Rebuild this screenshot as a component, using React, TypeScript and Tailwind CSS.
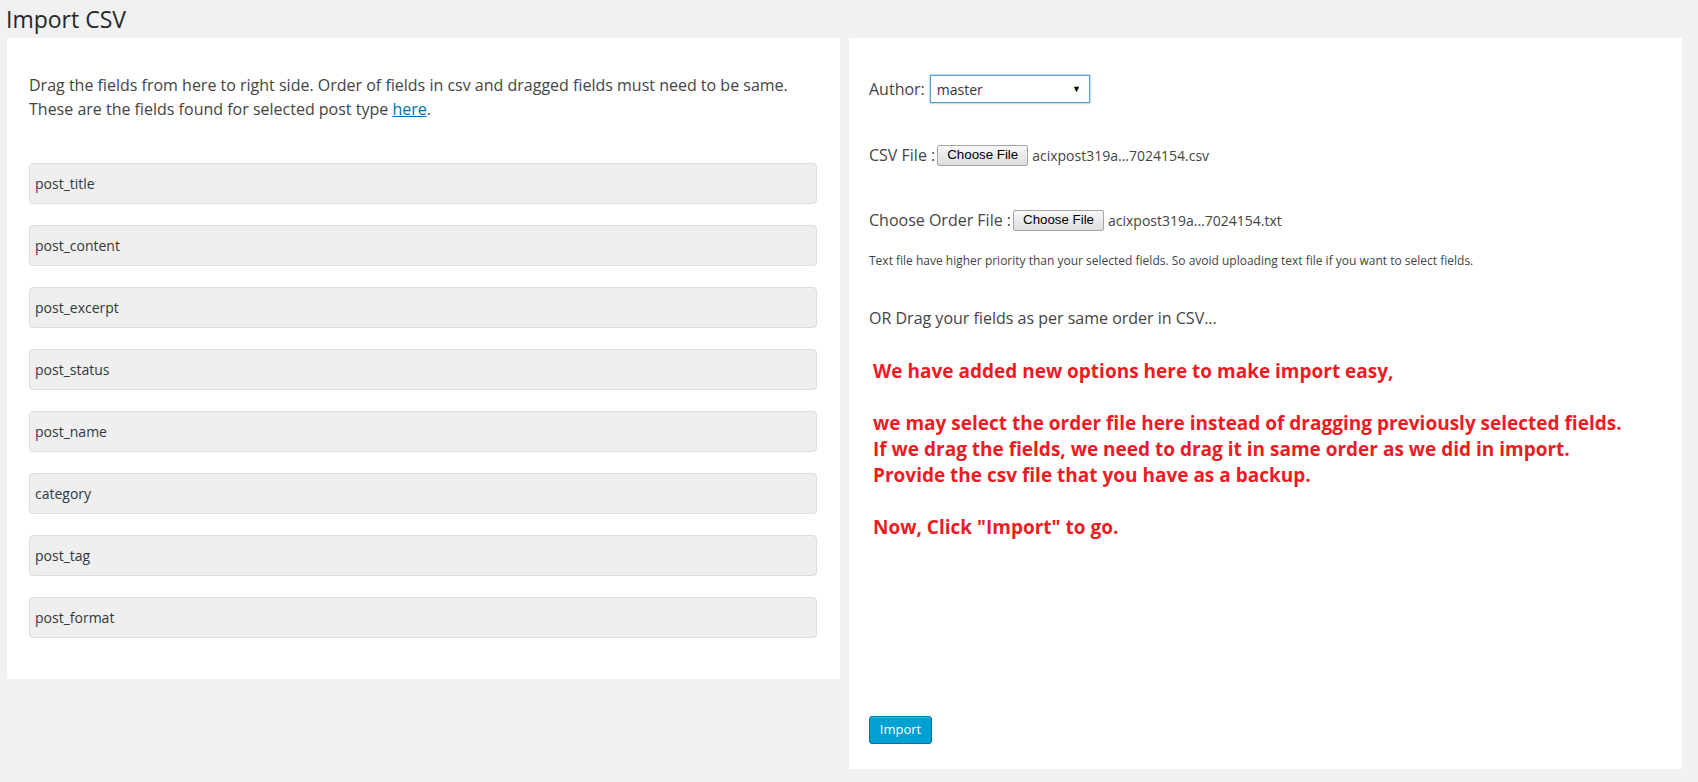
const fields = [
  'post_title',
  'post_content',
  'post_excerpt',
  'post_status',
  'post_name',
  'category',
  'post_tag',
  'post_format',
];

function FileButton() {
  return (
    <span className="inline-flex h-[21px] items-center rounded-[2px] border border-[#a6a6a6] bg-gradient-to-b from-[#f8f8f8] to-[#dddddd] px-[9px] font-['Liberation_Sans',Arial,sans-serif] text-[13.3px] text-black">
      Choose File
    </span>
  );
}

export default function App() {
  return (
    <div className="min-h-screen bg-[#f1f1f1] font-['Open_Sans',sans-serif] text-[#444]">
      {/* Page title */}
      <div className="h-[38px] pl-[6px] pt-[5px]">
        <h1 className="text-[23px] leading-[29px] font-normal text-[#23282d]">Import CSV</h1>
      </div>

      <div className="grid grid-cols-[minmax(0,1fr)_minmax(0,1fr)] items-start gap-[9px] pl-[7px] pr-[16px]">
        {/* Left — available fields */}
        <div className="bg-white pt-[35px] pl-[22px] pr-[23px] pb-[20px]">
          <p className="text-[16px] leading-[24px]">
            Drag the fields from here to right side. Order of fields in csv and dragged fields must need to be same.
            <br />
            These are the fields found for selected post type{' '}
            <a href="#" className="text-[#0073aa] underline">here</a>.
          </p>

          <div className="mt-[42px]">
            {fields.map((f) => (
              <div
                key={f}
                className="mb-[21px] flex h-[41px] items-center rounded-[4px] border border-[#dddddd] bg-[#efefef] pl-[5px] text-[14px] text-[#32373c]"
              >
                {f}
              </div>
            ))}
          </div>
        </div>

        {/* Right — import options */}
        <div className="bg-white pt-[37px] px-[20px] pb-[25px]">
          <div className="flex h-[28px] items-center text-[16px]">
            <span className="mr-[5px]">Author:</span>
            <div className="relative flex h-[28px] w-[160px] items-center border border-[#5b9dd9] pl-[6px] text-[14px] text-[#32373c] shadow-[0_0_2px_rgba(30,140,190,0.8)]">
              master
              <span className="absolute right-[8px] top-[6px] text-[9px] text-black">▼</span>
            </div>
          </div>

          <div className="mt-[41px] flex h-[22px] items-center text-[16px]">
            <span className="mr-[2px]">CSV File :</span>
            <FileButton />
            <span className="ml-[4px] text-[14px]">acixpost319a...7024154.csv</span>
          </div>

          <div className="mt-[43px] flex h-[22px] items-center text-[16px]">
            <span className="mr-[2px]">Choose Order File :</span>
            <FileButton />
            <span className="ml-[4px] text-[14px]">acixpost319a...7024154.txt</span>
          </div>

          <p className="mt-[22px] text-[12px] leading-[16px]">
            Text file have higher priority than your selected fields. So avoid uploading text file if you want to select fields.
          </p>

          <p className="mt-[37px] text-[16px] leading-[24px]">OR Drag your fields as per same order in CSV...</p>

          <div className="mt-[28px] pl-[4px] text-[19px] font-bold leading-[26px] text-[#ec1c24]">
            <p>We have added new options here to make import easy,</p>
            <br />
            <p>we may select the order file here instead of dragging previously selected fields.</p>
            <p>If we drag the fields, we need to drag it in same order as we did in import.</p>
            <p>Provide the csv file that you have as a backup.</p>
            <br />
            <p>Now, Click "Import" to go.</p>
          </div>

          <button className="mt-[176px] flex h-[28px] w-[63px] items-center justify-center rounded-[3px] border border-[#0073aa] bg-[#00a0d2] text-[13px] text-white shadow-[inset_0_1px_0_rgba(120,200,230,0.5)]">
            Import
          </button>
        </div>
      </div>
    </div>
  );
}
